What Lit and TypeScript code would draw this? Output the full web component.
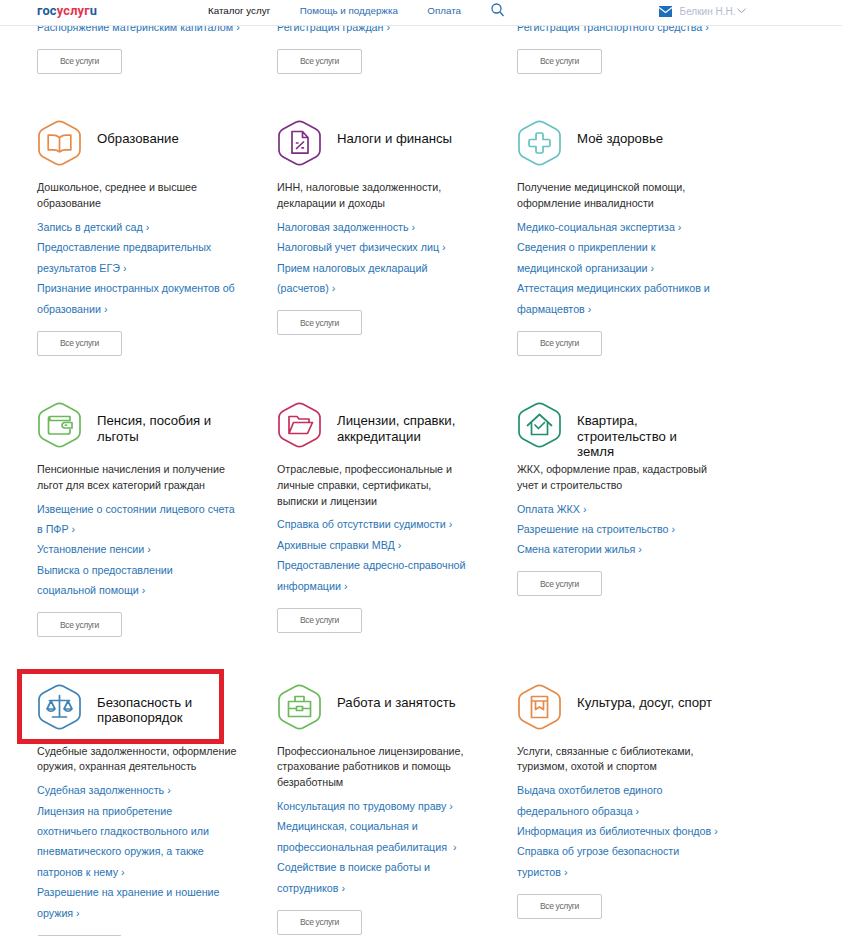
import { LitElement, html, css, svg } from "lit";
import { customElement } from "lit/decorators.js";

const hex = "M17.8 2.3Q21.5 .3 25.2 2.3L37.8 9.1Q42 11.4 42 16V30Q42 34.6 37.8 36.9L25.2 43.7Q21.5 45.7 17.8 43.7L5.2 36.9Q1 34.6 1 30V16Q1 11.4 5.2 9.1Z";

const icons: Record<string, { c: string; g: unknown }> = {
  book: { c: "#e58b47", g: svg`<path d="M21.5 17.5C19.5 16 17 15.2 15 15.2H10.2V29.8H15.5C18 29.8 20 30.5 21.5 32 23 30.5 25 29.8 27.5 29.8H32.8V15.2H28C26 15.2 23.5 16 21.5 17.5ZM21.5 17.5V31.5"/>` },
  tax: { c: "#7d2f85", g: svg`<path d="M14 11.5H24.5L30 17.5V33.2H14ZM24.5 11.5V17.5H30M18.5 28.5L25.5 22"/><path d="M18.5 23h1.4M24 27.8h1.4"/>` },
  health: { c: "#66c2c2", g: svg`<path d="M18 14.5Q18 13 19.5 13H23.5Q25 13 25 14.5V19.5H30.5Q32 19.5 32 21V25Q32 26.5 30.5 26.5H25V31.5Q25 33 23.5 33H19.5Q18 33 18 31.5V26.5H12.5Q11 26.5 11 25V21Q11 19.5 12.5 19.5H18Z"/>` },
  wallet: { c: "#6bb95b", g: svg`<path d="M32 18.5V14.5H12.5Q10.5 14.5 10.5 16.5V30Q10.5 32 12.5 32H30Q32 32 32 30V27.5M12 16.5Q11 18.5 13 18.5H32M34 20.5H27Q24 20.5 24 23.2T27 26H34Z"/><path d="M27.4 23.2h1"/>` },
  folder: { c: "#c4305c", g: svg`<path d="M11 31.5V14.5H19L21 17H31V20.5M11 31.5H29.5L34.5 20.5H15.5Z"/>` },
  house: { c: "#21906f", g: svg`<path d="M9.5 23.5L21.5 12.5 33.5 23.5M13.5 21V32.5H29.5V21"/><path d="M17 23L20.5 26.5 26.5 20.5"/>` },
  law: { c: "#3f82b6", g: svg`<path d="M21.5 11.5V32M14.5 33H28.5M11.5 16.5H31.5M13 17L9 25Q13 29.5 17 25ZM30 17L26 25Q30 29.5 34 25ZM9.2 25H16.8M26.2 25H33.8"/>` },
  work: { c: "#6bb95b", g: svg`<path d="M10.5 17.5H32.5V32.5H10.5ZM17 17.5V12.5H26V17.5M10.5 24.5H18.5M24.5 24.5H32.5M18.5 22.5H24.5V26.5H18.5Z"/>` },
  culture: { c: "#e58b47", g: svg`<path d="M13.5 12.5H29.5V33.5H13.5ZM13.5 17H29.5M17.5 17V25.5L21.5 23 25.5 25.5V17"/>` },
};

interface Card { icon?: string; title?: string; desc?: string; links: string[]; mark?: boolean; }

const cards: Card[] = [
  { links: ["Распоряжение материнским капиталом"] },
  { links: ["Регистрация граждан"] },
  { links: ["Регистрация транспортного средства"] },
  { icon: "book", title: "Образование", desc: "Дошкольное, среднее и высшее\nобразование",
    links: ["Запись в детский сад", "Предоставление предварительных\nрезультатов ЕГЭ", "Признание иностранных документов об\nобразовании"] },
  { icon: "tax", title: "Налоги и финансы", desc: "ИНН, налоговые задолженности,\nдекларации и доходы",
    links: ["Налоговая задолженность", "Налоговый учет физических лиц", "Прием налоговых деклараций\n(расчетов)"] },
  { icon: "health", title: "Моё здоровье", desc: "Получение медицинской помощи,\nоформление инвалидности",
    links: ["Медико-социальная экспертиза", "Сведения о прикреплении к\nмедицинской организации", "Аттестация медицинских работников и\nфармацевтов"] },
  { icon: "wallet", title: "Пенсия, пособия и льготы", desc: "Пенсионные начисления и получение\nльгот для всех категорий граждан",
    links: ["Извещение о состоянии лицевого счета\nв ПФР", "Установление пенсии", "Выписка о предоставлении\nсоциальной помощи"] },
  { icon: "folder", title: "Лицензии, справки, аккредитации", desc: "Отраслевые, профессиональные и\nличные справки, сертификаты,\nвыписки и лицензии",
    links: ["Справка об отсутствии судимости", "Архивные справки МВД", "Предоставление адресно-справочной\nинформации"] },
  { icon: "house", title: "Квартира, строительство и земля", desc: "ЖКХ, оформление прав, кадастровый\nучет и строительство",
    links: ["Оплата ЖКХ", "Разрешение на строительство", "Смена категории жилья"] },
  { icon: "law", title: "Безопасность и правопорядок", mark: true, desc: "Судебные задолженности, оформление\nоружия, охранная деятельность",
    links: ["Судебная задолженность", "Лицензия на приобретение\nохотничьего гладкоствольного или\nпневматического оружия, а также\nпатронов к нему", "Разрешение на хранение и ношение\nоружия"] },
  { icon: "work", title: "Работа и занятость", desc: "Профессиональное лицензирование,\nстрахование работников и помощь\nбезработным",
    links: ["Консультация по трудовому праву", "Медицинская, социальная и\nпрофессиональная реабилитация\u00a0", "Содействие в поиске работы и\nсотрудников"] },
  { icon: "culture", title: "Культура, досуг, спорт", desc: "Услуги, связанные с библиотеками,\nтуризмом, охотой и спортом",
    links: ["Выдача охотбилетов единого\nфедерального образца", "Информация из библиотечных фондов", "Справка об угрозе безопасности\nтуристов"] },
];

@customElement("app-root")
export class AppRoot extends LitElement {
  static styles = css`
    :host { display: block; height: 936px; overflow: hidden; background: #fff; font-family: "Liberation Sans", Arial, sans-serif; }
    .top { position: relative; z-index: 2; height: 25px; background: #fff; border-bottom: 1px solid #e6e8ea; display: flex; align-items: center; padding-left: 37px; font-size: 9.8px; }
    .logo { font-family: Roboto, sans-serif; font-weight: 700; font-size: 12.8px; color: #1c5a9e; width: 171px; letter-spacing: .2px; margin-top: -4px; }
    .logo b { color: #e5354f; font-weight: 700; }
    .nav { color: #2b6cb0; margin-right: 29.5px; margin-top: -5px; }
    .nav.on { color: #111; }
    .search { margin: -5px 155px 0 0; display: block; }
    .mail { display: block; margin: -3px 8px 0 0; }
    .user { color: #b4bad0; margin-top: -3px; font-size: 10px; }
    .chev { display: block; margin: -3px 0 0 2px; }
    .grid { display: grid; grid-template-columns: repeat(3, 240px); row-gap: 46.5px; padding-left: 37px; margin-top: -9px; }
    .card { position: relative; }
    .head { display: flex; height: 60px; padding-left: 1px; gap: 16px; }
    .head svg { flex: none; display: block; }
    .title { font-size: 13.2px; line-height: 15.6px; color: #111; padding-top: 11px; width: 140px; }
    .desc { font-size: 10.7px; line-height: 15.8px; color: #2e2e2e; margin: 0 0 5px; white-space: pre-line; }
    .links a { display: block; font-size: 10.7px; line-height: 20.4px; color: #2a74b5; text-decoration: none; white-space: pre-line; }
    .btn { display: flex; align-items: center; justify-content: center; box-sizing: border-box; width: 85px; height: 25px; margin-top: 11.5px; border: 1px solid #c9c9c9; border-radius: 2px; background: #fff; font: 8.5px "Liberation Sans", Arial, sans-serif; color: #666; letter-spacing: -.35px; }
    .mark { position: absolute; left: -20px; top: -15px; width: 207px; height: 75px; box-sizing: border-box; border: 5px solid #e2202c; pointer-events: none; }
  `;

  private icon(name: string) {
    const i = icons[name];
    return html`<svg width="43" height="46" viewBox="0 0 43 46" fill="none" stroke-width="1.7" stroke-linejoin="round" stroke-linecap="round" stroke=${i.c}>
      <path d=${hex}></path>${i.g}
    </svg>`;
  }

  render() {
    return html`
      <header class="top">
        <div class="logo">гос<b>услуг</b>u</div>
        <span class="nav on">Каталог услуг</span>
        <span class="nav">Помощь и поддержка</span>
        <span class="nav">Оплата</span>
        <svg class="search" width="13" height="14" viewBox="0 0 13 14" fill="none" stroke="#2b6cb0" stroke-width="1.3"><circle cx="5.5" cy="5.5" r="4.5"></circle><path d="M9 9L12.5 13"></path></svg>
        <svg class="mail" width="13" height="11" viewBox="0 0 13 11"><path fill="#1c6fb8" d="M0 0H13V11H0Z"></path><path d="M0 1.5L6.5 6.5 13 1.5" fill="none" stroke="#fff" stroke-width="1.2"></path></svg>
        <span class="user">Белкин Н.Н.</span>
        <svg class="chev" width="9" height="6" viewBox="0 0 9 6" fill="none" stroke="#8f9cc0" stroke-width="1"><path d="M.5 .8L4.5 4.6 8.5 .8"></path></svg>
      </header>
      <main class="grid">
        ${cards.map((c) => html`
          <section class="card">
            ${c.icon ? html`<div class="head">${this.icon(c.icon)}<div class="title">${c.title}</div></div>` : ""}
            ${c.desc ? html`<p class="desc">${c.desc}</p>` : ""}
            <div class="links">${c.links.map((l) => html`<a href="#">${l} ›</a>`)}</div>
            <button class="btn">Все услуги</button>
            ${c.mark ? html`<div class="mark"></div>` : ""}
          </section>`)}
      </main>
    `;
  }
}
